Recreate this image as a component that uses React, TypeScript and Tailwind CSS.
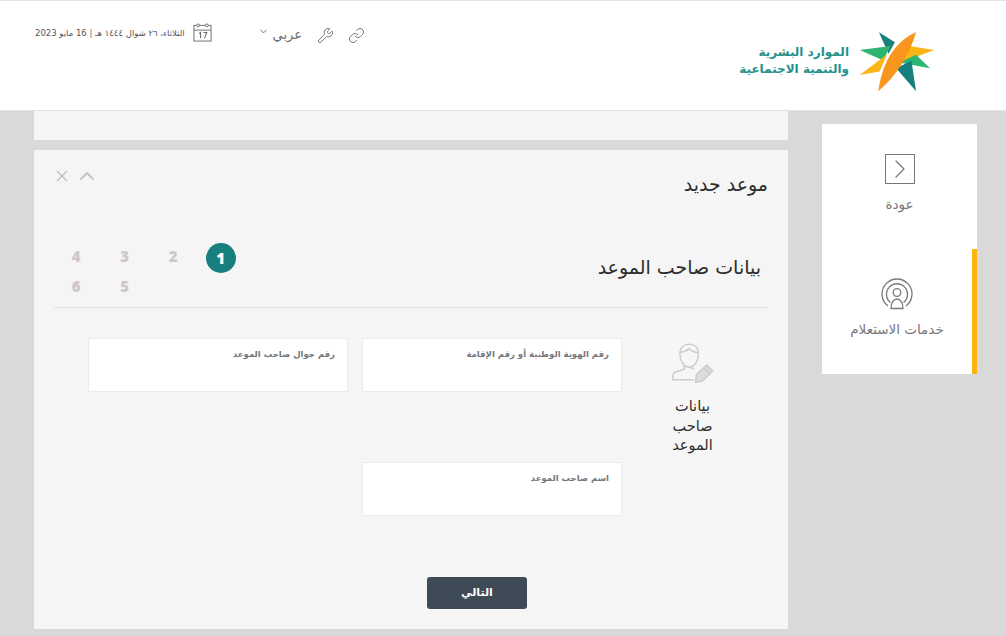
import { ChevronDown, ChevronRight, ChevronUp, Link, Wrench, X } from 'lucide-react';

const arabicFont = "font-['DejaVu_Sans',sans-serif]";

function Logo() {
    return (
        <svg viewBox="415 55 235 190" width="78" height="63" aria-hidden="true">
            <path d="M478 62 L526 92 L507 127 Z" fill="#17807e" />
            <path d="M420 115 L514 103 L490 146 Z" fill="#2fb573" />
            <path d="M420 191 L503 128 L480 180 Z" fill="#fbb615" />
            <path d="M645 115 L559 102 L544 153 Z" fill="#fbb615" />
            <path d="M632 170 L590 130 L539 153 Z" fill="#2fb573" />
            <path d="M590 240 L576 148 L530 170 Z" fill="#17807e" />
            <path d="M590 62 C535 85 490 140 476 240 C530 195 570 130 590 62 Z" fill="#f9961e" />
        </svg>
    );
}

function CalendarIcon() {
    return (
        <svg viewBox="0 0 20 20" width="19" height="19" fill="none" stroke="#6b6b6b" strokeWidth="1" className="-mt-[6px]" aria-hidden="true">
            <rect x="1" y="2.5" width="18" height="16.5" />
            <path d="M1 7.5 H19" />
            <circle cx="5.5" cy="2.5" r="1.5" fill="#fff" />
            <circle cx="14.5" cy="2.5" r="1.5" fill="#fff" />
            <path d="M6.5 11 L8 10 V16 M11 10 H14.5 L12 16" strokeWidth="1.1" />
        </svg>
    );
}

function InquiryIcon() {
    return (
        <svg viewBox="0 0 32 32" width="32" height="32" fill="none" stroke="#7a7a7a" strokeWidth="1.3" aria-hidden="true">
            <path d="M7 28 A15 15 0 1 1 25 28" />
            <path d="M9.5 24.5 A10.5 10.5 0 1 1 22.5 24.5" />
            <circle cx="16" cy="14.5" r="3.8" />
            <path d="M10 30.5 C10 24 13 21 16 21 C19 21 22 24 22 30.5 Z" />
        </svg>
    );
}

function PersonEditIcon() {
    return (
        <svg viewBox="120 65 130 125" width="43" height="42" fill="none" stroke="#cccccc" strokeWidth="4.5" aria-hidden="true">
            <path d="M147 100 C147 80 160 71 175 71 C190 71 203 80 203 100 C203 122 190 140 175 140 C160 140 147 122 147 100 Z" />
            <path d="M148 95 C160 95 168 90 175 84 C182 92 192 96 203 96" />
            <path d="M160 136 V146 L130 156 C126 160 125 170 125 178 H188" />
            <path d="M190 146 L175 140" />
            <path d="M194 186 L197 162 L228 134 L246 152 L215 182 Z" fill="#dddddd" />
            <path d="M220 142 L238 160" />
        </svg>
    );
}

function Field({ label }: { label: string }) {
    return (
        <div className="h-[54px] w-[260px] rounded-[2px] border border-[#ebebeb] bg-white px-[12px] pt-[7px]">
            <label className="block text-[8.5px] font-bold leading-[16px] text-[#77777b]">{label}</label>
        </div>
    );
}

function StepNumber({ value }: { value: number }) {
    return (
        <div className="flex h-[30px] w-[48.5px] items-center justify-center font-['Open_Sans',sans-serif] text-[15px] font-extrabold text-[#cfc7c7]">
            <span className="-mt-[4px]">{value}</span>
        </div>
    );
}

export default function App() {
    return (
        <div dir="rtl" className={`h-[636px] w-[1006px] overflow-hidden bg-[#d9d9d9] ${arabicFont}`}>
            <header className="flex h-[111px] items-start justify-between border-t border-b border-[#e3e3e3] bg-white pl-[35px] pr-[70px]">
                <div className="flex items-center gap-[9px] pt-[29px]">
                    <Logo />
                    <div className="-mt-[2px] text-[12px] font-bold leading-[17px] text-[#26918c]">
                        <div>الموارد البشرية</div>
                        <div>والتنمية الاجتماعية</div>
                    </div>
                </div>
                <div className="flex items-center pt-[24px] text-[#6b6b6b]">
                    <Link size={17} strokeWidth={1.3} className="ml-[14px]" />
                    <Wrench size={17} strokeWidth={1.3} className="ml-[15px]" />
                    <span className="ml-[4px] text-[13px] leading-[20px]">عربي</span>
                    <ChevronDown size={11} strokeWidth={2} className="ml-[46px] -mt-[8px]" />
                    <CalendarIcon />
                    <span className="mr-[8px] -mt-[4px] text-[8.5px] leading-[20px] text-[#555555]">
                        الثلاثاء، ٢٦ شوال ١٤٤٤ هـ | 16 مايو 2023
                    </span>
                </div>
            </header>

            <div className="flex items-start pl-[34px] pr-[29px]">
                <aside className="mt-[13px] w-[155px] bg-white text-[#77777b]">
                    <div className="flex h-[125px] flex-col items-center pt-[30px]">
                        <div className="flex h-[30px] w-[30px] items-center justify-center border-[1.5px] border-[#777777]">
                            <ChevronRight size={32} strokeWidth={0.9} className="shrink-0" />
                        </div>
                        <span className="mt-[10px] text-[13.5px] leading-[20px]">عودة</span>
                    </div>
                    <div className="flex h-[125px] flex-col items-center border-r-[5px] border-[#fdb40f] pt-[29px]">
                        <InquiryIcon />
                        <span className="mt-[9px] text-[13.5px] leading-[20px]">خدمات الاستعلام</span>
                    </div>
                </aside>

                <main className="mr-[34px] w-[754px]">
                    <div className="h-[29px] bg-[#f5f5f5]" />
                    <section className="relative mt-[10px] h-[479px] bg-[#f5f5f5] px-[20px]">
                        <div className="absolute left-[19px] top-[14px] flex items-center gap-[4px] text-[#c4c4c4]" dir="ltr">
                            <X size={18} strokeWidth={2} />
                            <ChevronUp size={24} strokeWidth={2} />
                        </div>
                        <h2 className="pt-[22px] text-[19px] font-normal leading-[24px] text-[#2c2c2c]">موعد جديد</h2>
                        <div className="mt-[47px] flex h-[65px] justify-between border-b border-[#e3e3e3]">
                            <h3 className="pr-[7px] text-[19px] font-normal leading-[48px] text-[#2c2c2c]">بيانات صاحب الموعد</h3>
                            <div className="ml-[-2px] grid w-[194px] grid-cols-4 content-start">
                                <div className="flex h-[30px] w-[48.5px] items-center justify-center">
                                    <div className="mr-[2px] flex h-[30px] w-[30px] items-center justify-center rounded-full bg-[#17807e] font-['Open_Sans',sans-serif] text-[15px] font-extrabold text-white">
                                        1
                                    </div>
                                </div>
                                <StepNumber value={2} />
                                <StepNumber value={3} />
                                <StepNumber value={4} />
                                <div className="h-[30px]" />
                                <div className="h-[30px]" />
                                <StepNumber value={5} />
                                <StepNumber value={6} />
                            </div>
                        </div>

                        <div className="mt-[20px] flex items-start pr-[28px]">
                            <div className="flex h-[142px] w-[95px] flex-col items-center bg-[#f6f6f6] pt-[14px]">
                                <PersonEditIcon />
                                <div className="mt-[13px] w-[64px] text-center text-[14.5px] leading-[19.5px] text-[#2c2c2c]">
                                    بيانات صاحب الموعد
                                </div>
                            </div>
                            <div className="mr-[23px] mt-[10px] grid grid-cols-[260px_260px] gap-x-[14px] gap-y-[70px]">
                                <Field label="رقم الهوية الوطنية أو رقم الإقامة" />
                                <Field label="رقم جوال صاحب الموعد" />
                                <Field label="اسم صاحب الموعد" />
                            </div>
                        </div>

                        <div className="mt-[61px] flex justify-start pr-[241px]">
                            <button className="h-[32px] w-[100px] rounded-[3px] bg-[#3e4a56] text-[11px] font-bold text-white">التالي</button>
                        </div>
                    </section>
                </main>
            </div>
        </div>
    );
}
